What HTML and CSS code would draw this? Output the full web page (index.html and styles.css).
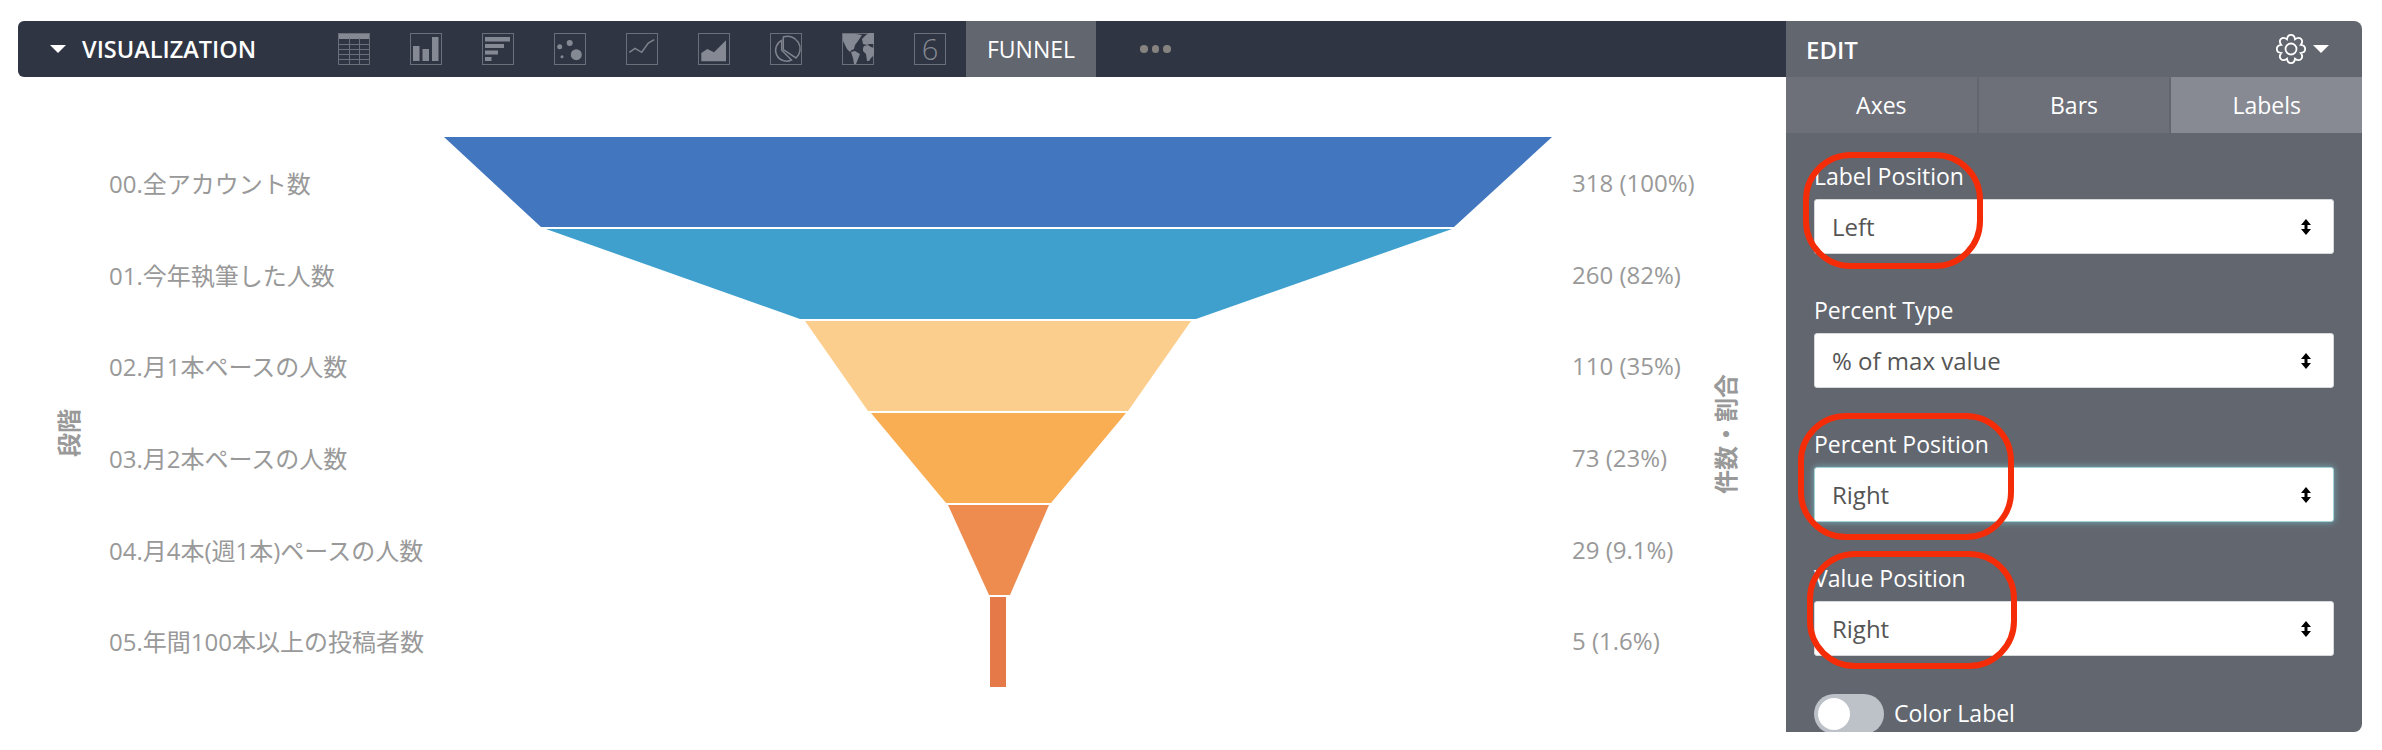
FILE: index.html
```html
<!DOCTYPE html>
<html lang="en">
<head>
    <meta charset="UTF-8">
    <title>Funnel visualization</title>
    <link rel="stylesheet" href="styles.css">
</head>
<body>

<div class="page">
    <div class="main">
        <div class="toolbar">
            <span class="caret caret-title"></span>
            <span class="toolbar-title">VISUALIZATION</span>
            <div class="viz-icons">
                <svg class="viz-icon" viewBox="0 0 32 32">
                    <rect class="icon-fill" x="0" y="0" width="32" height="6"/>
                    <path class="icon-line" d="M.5 .5H31.5V31.5H.5ZM.5 11.5H31.5M.5 16.5H31.5M.5 21.5H31.5M.5 26.5H31.5M11.5 5V32M21.5 5V32"/>
                </svg>
                <svg class="viz-icon" viewBox="0 0 32 32">
                    <rect class="icon-box" x=".5" y=".5" width="31" height="31"/>
                    <path class="icon-fill" d="M3 13H9.500V28H3ZM12.500 16H19V28H12.500ZM22 4H28.500V28H22Z"/>
                </svg>
                <svg class="viz-icon" viewBox="0 0 32 32">
                    <rect class="icon-box" x=".5" y=".5" width="31" height="31"/>
                    <path class="icon-fill" d="M3 4H28V8.500H3ZM3 11H22V15H3ZM3 17.500H16V21.500H3ZM3 24H9.500V28H3Z"/>
                </svg>
                <svg class="viz-icon" viewBox="0 0 32 32">
                    <rect class="icon-box" x=".5" y=".5" width="31" height="31"/>
                    <circle class="icon-fill" cx="5.700" cy="13.700" r="2.500"/>
                    <circle class="icon-fill" cx="15.700" cy="10" r="3"/>
                    <circle class="icon-fill" cx="22.300" cy="21.700" r="5.500"/>
                    <circle class="icon-fill" cx="8" cy="23.700" r="1.500"/>
                </svg>
                <svg class="viz-icon" viewBox="0 0 32 32">
                    <rect class="icon-box" x=".5" y=".5" width="31" height="31"/>
                    <path class="icon-stroke" d="M3.300 19.300L9 15.300L15.700 19.300L22.300 10L28.300 6.700"/>
                </svg>
                <svg class="viz-icon" viewBox="0 0 32 32">
                    <rect class="icon-box" x=".5" y=".5" width="31" height="31"/>
                    <path class="icon-fill" d="M3.300 28.300V20L9.300 16L16 19.300L28 7.300V28.300Z"/>
                </svg>
                <svg class="viz-icon" viewBox="0 0 32 32">
                    <rect class="icon-box" x=".5" y=".5" width="31" height="31"/>
                    <path class="icon-stroke" d="M11.700 7.300A11 11 0 1 0 21.500 27L11.700 17.300Z"/>
                    <path class="icon-stroke" d="M13.300 4A12.500 12.500 0 0 1 26 25L13.300 16.700Z"/>
                </svg>
                <svg class="viz-icon" viewBox="0 0 32 32">
                    <rect class="icon-box" x=".5" y=".5" width="31" height="31"/>
                    <path class="icon-fill" d="M1 1H14L20 2L16 8L13 12L12 16L9 17.500L8 19L5 16L3 12L1 8Z"/>
                    <path class="icon-fill" d="M9 19L13 18L18 21L16 26L14 31H12L11 25Z"/>
                    <path class="icon-fill" d="M22 13L26 12L29 14L32 15V22L29 25L27 28H25L24 21L21 18V15Z"/>
                    <path class="icon-fill" d="M20 6L24 2L27 0H32V11H27L25 12L21 11Z"/>
                </svg>
                <span class="viz-icon single-value">6</span>
            </div>
            <span class="funnel-tab">FUNNEL</span>
            <div class="more-dots"><span></span><span></span><span></span></div>
        </div>

        <div class="chart">
            <div class="axis-cell">
                <span class="axis-title axis-left">段階</span>
            </div>
            <div class="labels">
                <div class="row">00.全アカウント数</div>
                <div class="row">01.今年執筆した人数</div>
                <div class="row">02.月1本ペースの人数</div>
                <div class="row">03.月2本ペースの人数</div>
                <div class="row">04.月4本(週1本)ペースの人数</div>
                <div class="row">05.年間100本以上の投稿者数</div>
            </div>
            <svg class="funnel" viewBox="0 0 1108 550">
                <polygon class="seg-0" points="0,0 1108,0 1010,90 97,90"/>
                <polygon class="seg-1" points="102,92 1008,92 752,182 356,182"/>
                <polygon class="seg-2" points="361,184 747,184 684,274 424,274"/>
                <polygon class="seg-3" points="427,276 682,276 607,366 502,366"/>
                <polygon class="seg-4" points="504,368 605,368 566,458 545,458"/>
                <polygon class="seg-5" points="546,460 562,460 562,550 546,550"/>
            </svg>
            <div class="values">
                <div class="row">318 (100%)</div>
                <div class="row">260 (82%)</div>
                <div class="row">110 (35%)</div>
                <div class="row">73 (23%)</div>
                <div class="row">29 (9.1%)</div>
                <div class="row">5 (1.6%)</div>
            </div>
            <span class="axis-title axis-right">件数・割合</span>
        </div>
    </div>

    <div class="panel">
        <div class="panel-header">
            <span class="panel-title">EDIT</span>
            <svg class="gear" viewBox="-16 -16 32 32">
                <path d="M9.700 -4.020C15.650 -3.330 15.650 3.330 9.700 4.020C13.420 8.710 8.710 13.420 4.020 9.700C3.330 15.650 -3.330 15.650 -4.020 9.700C-8.710 13.420 -13.420 8.710 -9.700 4.020C-15.650 3.330 -15.650 -3.330 -9.700 -4.020C-13.420 -8.710 -8.710 -13.420 -4.020 -9.700C-3.330 -15.650 3.330 -15.650 4.020 -9.700C8.710 -13.420 13.420 -8.710 9.700 -4.020Z"/>
                <circle r="5.500"/>
            </svg>
            <span class="caret"></span>
        </div>
        <div class="tabs">
            <div class="tab">Axes</div>
            <div class="tab">Bars</div>
            <div class="tab tab-active">Labels</div>
        </div>
        <div class="panel-body">
            <div class="field">
                <label>Label Position</label>
                <div class="select">Left
                    <svg class="updown" viewBox="0 0 10 16"><path d="M5 0L10 6H6.500V10H10L5 16L0 10H3.500V6H0Z"/></svg>
                </div>
            </div>
            <div class="field">
                <label>Percent Type</label>
                <div class="select">% of max value
                    <svg class="updown" viewBox="0 0 10 16"><path d="M5 0L10 6H6.500V10H10L5 16L0 10H3.500V6H0Z"/></svg>
                </div>
            </div>
            <div class="field">
                <label>Percent Position</label>
                <div class="select select-focus">Right
                    <svg class="updown" viewBox="0 0 10 16"><path d="M5 0L10 6H6.500V10H10L5 16L0 10H3.500V6H0Z"/></svg>
                </div>
            </div>
            <div class="field">
                <label>Value Position</label>
                <div class="select">Right
                    <svg class="updown" viewBox="0 0 10 16"><path d="M5 0L10 6H6.500V10H10L5 16L0 10H3.500V6H0Z"/></svg>
                </div>
            </div>
            <div class="toggle-row">
                <span class="toggle"><span class="knob"></span></span>
                <span class="toggle-label">Color Label</span>
            </div>
        </div>

        <!-- red marks drawn over the screenshot -->
        <div class="mark mark-label"></div>
        <div class="mark mark-percent"></div>
        <div class="mark mark-value"></div>
    </div>
</div>

</body>
</html>
```

FILE: styles.css
```css
body {
    margin: 0;
    background-color: #ffffff;
    font-family: "Open Sans", "Noto Sans CJK JP", sans-serif;
    font-size: 23px;
}

.page {
    display: flex;
    padding: 21px 20px 0 18px;
}

.main {
    flex: 1;
    min-width: 0;
}

/* toolbar */
.toolbar {
    display: flex;
    align-items: center;
    height: 56px;
    padding-left: 32px;
    background-color: #2f3542;
    border-radius: 6px 0 0 6px;
}

.caret {
    display: block;
    width: 0;
    height: 0;
    border-left: 8px solid transparent;
    border-right: 8px solid transparent;
    border-top: 8px solid #ffffff;
}

.caret-title {
    margin-right: 16px;
}

.toolbar-title {
    width: 256px;
    color: #ffffff;
    font-size: 23.500px;
    font-weight: 600;
}

.viz-icons {
    display: flex;
    gap: 40px;
}

.viz-icon {
    display: block;
    width: 32px;
    height: 32px;
}

.icon-box {
    fill: none;
    stroke: #6b6f79;
}

.icon-line {
    fill: none;
    stroke: #6b6f79;
}

.icon-fill {
    fill: #858993;
}

.icon-stroke {
    fill: none;
    stroke: #7f838d;
    stroke-width: 1.500;
}

.single-value {
    box-sizing: border-box;
    border: 1px solid #6b6f79;
    color: #858993;
    font-size: 29px;
    font-weight: 300;
    line-height: 30px;
    text-align: center;
}

.funnel-tab {
    display: flex;
    align-items: center;
    justify-content: center;
    width: 130px;
    height: 56px;
    margin-left: 20px;
    background-color: #62666f;
    color: #ffffff;
    font-size: 23px;
}

.more-dots {
    display: flex;
    gap: 4px;
    margin-left: 44px;
}

.more-dots span {
    width: 7.500px;
    height: 7.500px;
    border-radius: 50%;
    background-color: #85827f;
}

/* chart */
.chart {
    display: flex;
    padding-top: 60px;
    color: #999999;
}

.axis-cell {
    width: 91px;
}

.axis-title {
    display: block;
    writing-mode: vertical-rl;
    text-orientation: sideways;
    transform: rotate(180deg);
    font-size: 24px;
    font-weight: 700;
    line-height: 26px;
    height: fit-content;
}

.axis-left {
    margin: 272px 0 0 38px;
}

.axis-right {
    margin: 237px 0 0 14px;
}

.labels {
    width: 335px;
}

.values {
    width: 127px;
    margin-left: 20px;
}

.row {
    display: flex;
    align-items: center;
    height: 91.600px;
    font-size: 24px;
    white-space: nowrap;
}

.funnel {
    display: block;
    flex: none;
    width: 1108px;
    height: 550px;
}

.seg-0 { fill: #4276be; }
.seg-1 { fill: #3fa0cd; }
.seg-2 { fill: #fcce8d; }
.seg-3 { fill: #f9ae54; }
.seg-4 { fill: #ee8c4f; }
.seg-5 { fill: #e57947; }

/* edit panel */
.panel {
    position: relative;
    flex: none;
    width: 576px;
    height: 711px;
    overflow: hidden;
    background-color: #62666f;
    border-radius: 0 8px 8px 0;
    color: #ffffff;
}

.panel-header {
    display: flex;
    align-items: center;
    height: 56px;
    padding: 0 33px 0 20px;
}

.panel-title {
    flex: 1;
    font-size: 24px;
    font-weight: 600;
}

.gear {
    width: 32px;
    height: 32px;
    margin-right: 6px;
}

.gear path, .gear circle {
    fill: none;
    stroke: #ffffff;
    stroke-width: 1.800;
}

.tabs {
    display: flex;
    height: 56px;
}

.tab {
    display: flex;
    flex: 1;
    align-items: center;
    justify-content: center;
    box-sizing: border-box;
    background-color: #6d7079;
    border-right: 2px solid #62666f;
}

.tab-active {
    background-color: #878a93;
    border-right: 0;
}

.panel-body {
    padding: 28px 28px 0;
}

.field {
    margin-bottom: 41px;
}

.field label {
    display: block;
    height: 30px;
    margin-bottom: 8px;
    line-height: 30px;
}

.select {
    display: flex;
    align-items: center;
    justify-content: space-between;
    box-sizing: border-box;
    height: 55px;
    padding: 0 22px 0 17px;
    background-color: #ffffff;
    border: 1px solid #d6d8dc;
    border-radius: 3px;
    color: #555555;
    font-size: 24px;
}

.select-focus {
    border-color: #a5d3d8;
    box-shadow: 0 0 7px rgba(130, 225, 235, 0.6);
}

.updown {
    width: 10px;
    height: 16px;
}

.toggle-row {
    display: flex;
    align-items: center;
    gap: 10px;
    margin-top: -3px;
}

.toggle-label {
    margin-bottom: 3px;
}

.toggle {
    display: block;
    box-sizing: border-box;
    width: 70px;
    height: 40px;
    padding: 4px;
    background-color: #bdc1c8;
    border-radius: 20px;
}

.knob {
    display: block;
    width: 32px;
    height: 32px;
    border-radius: 50%;
    background-color: #ffffff;
}

.mark {
    position: absolute;
    box-sizing: border-box;
    border: 6px solid #f52c08;
    border-radius: 48px;
}

.mark-label {
    left: 17px;
    top: 131px;
    width: 180px;
    height: 117px;
}

.mark-percent {
    left: 12px;
    top: 392px;
    width: 216px;
    height: 127px;
}

.mark-value {
    left: 21px;
    top: 530px;
    width: 210px;
    height: 118px;
}
```
